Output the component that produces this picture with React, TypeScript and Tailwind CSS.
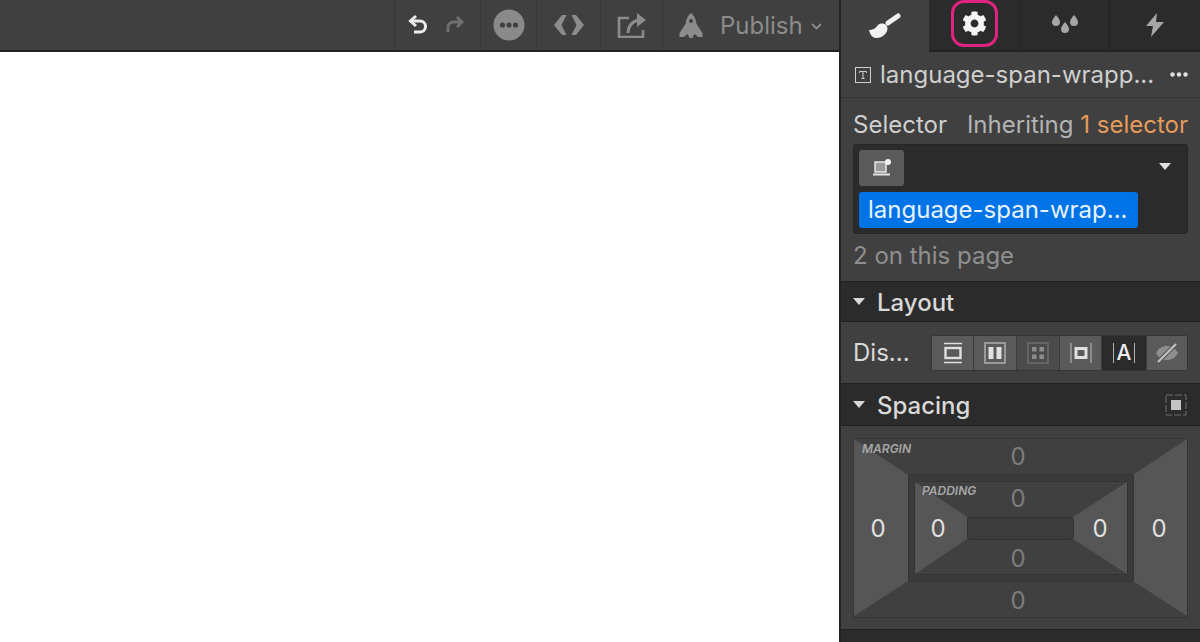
import { FaCog } from 'react-icons/fa'

function ToolCell({ width, children }: { width: string; children: React.ReactNode }) {
  return (
    <div className={`flex h-full shrink-0 items-center justify-center border-l border-[#363636] ${width}`}>
      {children}
    </div>
  )
}

function Toolbar() {
  return (
    <div className="flex h-[52px] shrink-0 justify-end border-b-2 border-[#222222] bg-[#404040]">
      <ToolCell width="w-[86px]">
        <div className="mr-[3px] flex items-center gap-[16px]">
          <svg width="22" height="24" viewBox="0 0 22 24" fill="none" stroke="#ececec" strokeWidth="3">
            <path d="M9 3 3.500 8 9 13" />
            <path d="M3 8h10a5.500 5.500 0 0 1 0 11H7" />
          </svg>
          <svg width="20" height="22" viewBox="0 0 20 22" fill="none" stroke="#707070" strokeWidth="2.800">
            <path d="m12 3 5 5-5 5" />
            <path d="M17 8H8a5 5 0 0 0-5 5v5" />
          </svg>
        </div>
      </ToolCell>
      <ToolCell width="w-[56px]">
        <svg width="32" height="32" viewBox="0 0 32 32">
          <circle cx="16" cy="16" r="15.500" fill="#8a8a8a" />
          <circle cx="9.500" cy="16" r="2.600" fill="#404040" />
          <circle cx="16" cy="16" r="2.600" fill="#404040" />
          <circle cx="22.500" cy="16" r="2.600" fill="#404040" />
        </svg>
      </ToolCell>
      <ToolCell width="w-[64px]">
        <svg width="32" height="22" viewBox="0 0 32 22" fill="#8c8c8c">
          <path d="M9 1h4.500l-5 10 5 10H9L1 11z" />
          <path d="M23 1h-4.500l5 10-5 10H23l8-10z" />
        </svg>
      </ToolCell>
      <ToolCell width="w-[62px]">
        <svg width="30" height="26" viewBox="0 0 30 26" fill="none" stroke="#8c8c8c" strokeWidth="2.600">
          <path d="M12 6H2v19h24v-7" />
          <path d="M11 21c0-7 4-11 10-13" strokeWidth="3" />
          <path d="M20 1 29 8 20 15z" fill="#8c8c8c" stroke="none" />
        </svg>
      </ToolCell>
      <div className="flex h-full w-[177px] shrink-0 items-center border-l border-[#363636] pl-[16px]">
        <svg width="24" height="25" viewBox="0 0 24 25" fill="#8c8c8c">
          <path
            fillRule="evenodd"
            d="M12 0C15 2.500 17 6 17.500 11L23.500 20V24H19L16.500 21.500H15L13.500 25H10.500L9 21.500H7.500L5 24H.5V20L6.500 11C7 6 9 2.500 12 0zM12 6a2 2 0 1 0 0 4 2 2 0 0 0 0-4z"
          />
        </svg>
        <span className="ml-[17px] mt-[1px] text-[24px] leading-none text-[#8c8c8c]">Publish</span>
        <svg className="ml-[8px] mt-[3px]" width="11" height="7" viewBox="0 0 11 7" fill="none" stroke="#8c8c8c" strokeWidth="1.800">
          <path d="m1 1 4.500 4.500L10 1" />
        </svg>
      </div>
    </div>
  )
}

function PanelTabs() {
  return (
    <div className="flex h-[52px] shrink-0 bg-[#2b2b2b]">
      <div className="flex w-[88px] items-center justify-center bg-[#404040]">
        <svg className="mr-[1px]" width="32" height="26" viewBox="0 0 32 26" fill="#f2f2f2">
          <path d="M19 10 29 3" fill="none" stroke="#f2f2f2" strokeWidth="5" strokeLinecap="round" />
          <path d="M0 17c4 0 7-2 9-5 2-2 6-2 8 0 2 2 2 5 0 8-2 3-6 5-10 5-3 0-6-3-7-8z" />
        </svg>
      </div>
      <div className="flex w-[90px] items-start justify-center border-b-2 border-[#222222]">
        <div className="flex h-[47px] w-[47px] items-center justify-center rounded-[13px] border-[3px] border-[#e0237f]">
          <FaCog className="h-[25px] w-[25px] text-[#f5f5f5]" />
        </div>
      </div>
      <div className="flex w-[90px] items-center justify-center border-b-2 border-l border-[#222222]">
        <svg width="28" height="24" viewBox="0 0 28 24" fill="#a6a6a6">
          <path d="M5 2c2.500 3 4 5 4 7a4 4 0 0 1-8 0c0-2 1.500-4 4-7z" />
          <path d="M23 2c2.500 3 4 5 4 7a4 4 0 0 1-8 0c0-2 1.500-4 4-7z" />
          <path d="M14 9c2.500 3 4 5 4 7a4 4 0 0 1-8 0c0-2 1.500-4 4-7z" />
        </svg>
      </div>
      <div className="flex flex-1 items-center justify-center border-b-2 border-l border-[#222222]">
        <svg width="20" height="24" viewBox="0 0 20 24" fill="#a6a6a6">
          <path d="M12 0 1 13h7l-2 11 13-15h-8z" />
        </svg>
      </div>
    </div>
  )
}

function SectionHeader({ title, height, right }: { title: string; height: string; right?: React.ReactNode }) {
  return (
    <div className={`flex shrink-0 items-center border-y border-[#222222] bg-[#2b2b2b] px-[12px] ${height}`}>
      <svg width="12" height="7" viewBox="0 0 12 7" fill="#d9d9d9">
        <path d="M0 0h12L6 7z" />
      </svg>
      <span className="ml-[12px] mt-[2px] text-[24px] font-medium leading-none text-[#d9d9d9]">{title}</span>
      {right}
    </div>
  )
}

function DisplayButton({ width, bg, children }: { width: string; bg: string; children: React.ReactNode }) {
  return <div className={`flex h-full items-center justify-center ${width} ${bg}`}>{children}</div>
}

function DisplayRow() {
  return (
    <div className="flex h-[61px] shrink-0 items-center bg-[#404040] pl-[12px]">
      <span className="w-[78px] text-[24px] text-[#d9d9d9]">Dis...</span>
      <div className="flex h-[36px] gap-[1px] rounded-[2px] border border-[#363636] bg-[#3a3a3a]">
        <DisplayButton width="w-[41px]" bg="bg-[#5a5a5a]">
          <svg width="20" height="22" viewBox="0 0 20 22" fill="none" stroke="#e0e0e0" strokeWidth="1.500">
            <path d="M1 1.500h18M1 20.500h18" />
            <rect x="2.500" y="6" width="15" height="10" strokeWidth="2.400" />
          </svg>
        </DisplayButton>
        <DisplayButton width="w-[42px]" bg="bg-[#5a5a5a]">
          <svg width="22" height="22" viewBox="0 0 22 22" fill="#e0e0e0">
            <rect x="1" y="1" width="20" height="20" fill="none" stroke="#b0b0b0" strokeWidth="1.500" />
            <rect x="4.500" y="5" width="5" height="12" />
            <rect x="12.500" y="5" width="5" height="12" />
          </svg>
        </DisplayButton>
        <DisplayButton width="w-[42px]" bg="bg-[#4b4b4b]">
          <svg width="22" height="22" viewBox="0 0 22 22" fill="#8c8c8c">
            <rect x="1" y="1" width="20" height="20" fill="none" stroke="#6e6e6e" strokeWidth="1.500" />
            <rect x="5" y="5" width="4.500" height="4.500" />
            <rect x="12.500" y="5" width="4.500" height="4.500" />
            <rect x="5" y="12.500" width="4.500" height="4.500" />
            <rect x="12.500" y="12.500" width="4.500" height="4.500" />
          </svg>
        </DisplayButton>
        <DisplayButton width="w-[41px]" bg="bg-[#5a5a5a]">
          <svg width="22" height="22" viewBox="0 0 22 22" fill="none" stroke="#e0e0e0">
            <path d="M1 1v20M21 1v20" strokeWidth="1.200" stroke="#b0b0b0" />
            <rect x="6" y="6.500" width="10" height="9" strokeWidth="3" />
          </svg>
        </DisplayButton>
        <DisplayButton width="w-[44px]" bg="bg-[#2b2b2b]">
          <div className="flex items-center gap-[3px] text-[#ececec]">
            <span className="h-[20px] w-px bg-[#b0b0b0]" />
            <span className="text-[21px] font-medium leading-none">A</span>
            <span className="h-[20px] w-px bg-[#b0b0b0]" />
          </div>
        </DisplayButton>
        <DisplayButton width="w-[40px]" bg="bg-[#5a5a5a]">
          <svg width="24" height="22" viewBox="0 0 24 22">
            <path d="M1 11c3-5 6-7 11-7s8 2 11 7c-3 5-6 7-11 7s-8-2-11-7z" fill="#8e8e8e" />
            <path d="M3 20 21 2" stroke="#5a5a5a" strokeWidth="4.500" />
            <path d="M3 20 21 2" stroke="#c4c4c4" strokeWidth="2" />
          </svg>
        </DisplayButton>
      </div>
    </div>
  )
}

function SpacingBox() {
  const label = 'absolute text-[12px] font-semibold italic leading-none text-[#a6a6a6]'
  const dim = 'absolute w-[24px] text-center text-[24px] leading-none text-[#7d7d7d]'
  const bright = 'absolute w-[24px] text-center text-[24px] leading-none text-[#e0e0e0]'
  return (
    <div className="relative h-[180px] w-[335px] rounded-[2px]">
      <svg className="absolute inset-0" width="335" height="180" viewBox="0 0 335 180">
        {/* margin */}
        <rect x="0.500" y="0.500" width="334" height="179" fill="#404040" stroke="#363636" />
        <path d="M1 1 55 37v106L1 178z" fill="#565656" />
        <path d="M334 1 280 37v106l54 35z" fill="#565656" />
        {/* padding */}
        <rect x="55.500" y="36.500" width="225" height="107" rx="2" fill="#3b3b3b" stroke="#333333" />
        <rect x="61.500" y="43.500" width="213" height="93" fill="#404040" stroke="#333333" />
        <path d="M62 44 114 79v22L62 136z" fill="#565656" />
        <path d="M274 44 220 79v22l54 35z" fill="#565656" />
        <rect x="114.500" y="79.500" width="106" height="22" rx="3" fill="#3c3c3c" stroke="#333333" />
      </svg>
      <span className={`${label} left-[9px] top-[5px]`}>MARGIN</span>
      <span className={`${label} left-[69px] top-[47px]`}>PADDING</span>
      <span className={`${dim} left-[153px] top-[7px]`}>0</span>
      <span className={`${dim} left-[153px] top-[49px]`}>0</span>
      <span className={`${dim} left-[153px] top-[109px]`}>0</span>
      <span className={`${dim} left-[153px] top-[151px]`}>0</span>
      <span className={`${bright} left-[13px] top-[79px]`}>0</span>
      <span className={`${bright} left-[73px] top-[79px]`}>0</span>
      <span className={`${bright} left-[235px] top-[79px]`}>0</span>
      <span className={`${bright} left-[294px] top-[79px]`}>0</span>
    </div>
  )
}

function StylePanel() {
  return (
    <div className="flex w-[361px] shrink-0 flex-col border-l-2 border-[#222222] bg-[#404040]">
      <PanelTabs />
      <div className="flex h-[46px] shrink-0 items-center border-b border-[#363636] pl-[14px] pr-[12px]">
        <svg width="16" height="16" viewBox="0 0 16 16" fill="none" stroke="#cfcfcf" strokeWidth="1">
          <rect x="0.500" y="0.500" width="15" height="15" />
          <path d="M4.500 6V4.500h7V6M8 4.500v7M6.500 11.500h3" />
        </svg>
        <span className="ml-[9px] text-[24px] leading-none text-[#cfcfcf]">language-span-wrapp...</span>
        <svg className="ml-auto" width="18" height="5" viewBox="0 0 18 5" fill="#e0e0e0">
          <circle cx="2.500" cy="2.500" r="2.200" />
          <circle cx="9" cy="2.500" r="2.200" />
          <circle cx="15.500" cy="2.500" r="2.200" />
        </svg>
      </div>
      <div className="flex h-[183px] shrink-0 flex-col px-[12px]">
        <div className="mt-[11px] flex justify-between text-[24px] leading-[32px]">
          <span className="text-[#cfcfcf]">Selector</span>
          <span className="text-[#b3b3b3]">
            Inheriting <span className="text-[#e59b5a]">1 selector</span>
          </span>
        </div>
        <div className="mt-[3px] h-[90px] w-[335px] rounded-[3px] border border-[#262626] bg-[#2b2b2b] pl-[5px] pt-[5px]">
          <div className="flex items-center justify-between pr-[16px]">
            <div className="flex h-[36px] w-[45px] items-center justify-center rounded-[3px] bg-[#5a5a5a]">
              <svg width="20" height="20" viewBox="0 0 20 20">
                <rect x="3" y="4" width="11" height="10" fill="#9a9a9a" stroke="#e6e6e6" strokeWidth="1.500" />
                <path d="M1 16.500h17" stroke="#e6e6e6" strokeWidth="2" />
                <circle cx="16" cy="4" r="3" fill="#f2f2f2" />
              </svg>
            </div>
            <svg className="mb-[3px]" width="12" height="7" viewBox="0 0 12 7" fill="#e0e0e0">
              <path d="M0 0h12L6 7z" />
            </svg>
          </div>
          <div className="mt-[6px] flex h-[36px] w-[279px] items-center rounded-[3px] bg-[#0073e6] pl-[9px] text-[24px] leading-none text-[#e8f2fc]">
            language-span-wrap...
          </div>
        </div>
        <div className="mt-[6px] text-[24px] leading-[32px] text-[#8f8f8f]">2 on this page</div>
      </div>
      <SectionHeader title="Layout" height="h-[41px]" />
      <DisplayRow />
      <SectionHeader
        title="Spacing"
        height="h-[43px]"
        right={
          <svg className="ml-auto mr-[1px]" width="22" height="22" viewBox="0 0 22 22">
            <rect x="1" y="1" width="20" height="20" fill="none" stroke="#6e6e6e" strokeDasharray="7 2" />
            <rect x="6" y="6" width="10" height="10" fill="#c4c4c4" />
          </svg>
        }
      />
      <div className="flex h-[203px] shrink-0 justify-start pl-[12px] pt-[12px]">
        <SpacingBox />
      </div>
      <div className="flex-1 border-t border-[#222222] bg-[#2b2b2b]" />
    </div>
  )
}

export default function App() {
  return (
    <div className="flex h-[642px] w-[1200px] overflow-hidden bg-white font-['Inter',sans-serif]">
      <div className="flex min-w-0 flex-1 flex-col">
        <Toolbar />
        <div className="flex-1 bg-white" />
      </div>
      <StylePanel />
    </div>
  )
}
